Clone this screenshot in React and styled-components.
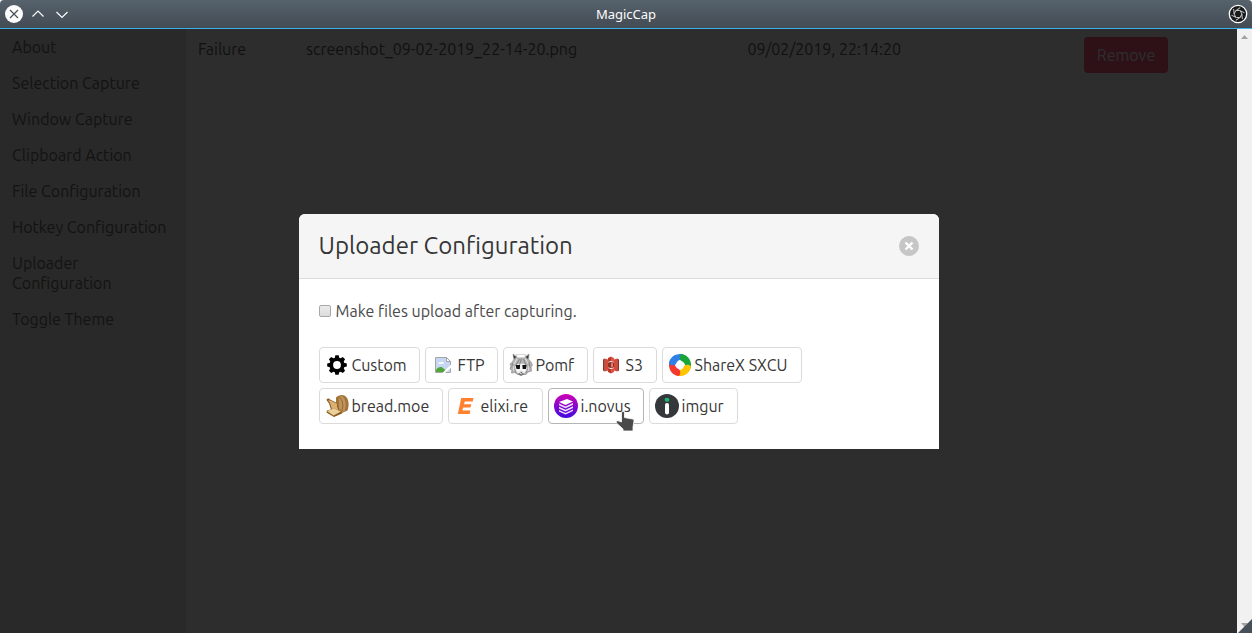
import React, { useState } from 'react';
import styled, { createGlobalStyle, css } from 'styled-components';

const GlobalStyle = createGlobalStyle`
  *, *::before, *::after { box-sizing: border-box; }
  body {
    margin: 0;
    background: #ffffff;
    color: #4a4a4a;
    font: 16px/24px "Ubuntu", "Noto Sans", sans-serif;
  }
  button { font: inherit; }
`;

const Window = styled.div`
  display: flex;
  flex-direction: column;
  height: 100vh;
  overflow: hidden;
`;

const TitleBar = styled.header`
  display: grid;
  grid-template-columns: 1fr auto 1fr;
  align-items: center;
  flex: none;
  height: 29px;
  padding: 0 4px;
  border-bottom: 1px solid #3daee9;
  border-radius: 4px 4px 0 0;
  background: linear-gradient(#56626c, #434b54);
`;

const WindowTitle = styled.h1`
  margin: 0;
  color: #fcfcfc;
  font: 13px/20px "Noto Sans", sans-serif;
`;

const WindowControls = styled.div`
  display: flex;
  gap: 4px;
  justify-content: ${({ $end }) => ($end ? 'flex-end' : 'flex-start')};
`;

const WindowButton = styled.button`
  display: flex;
  width: 20px;
  height: 20px;
  padding: 0;
  border: 0;
  background: none;
`;

const Viewport = styled.div`
  position: relative;
  display: flex;
  flex: 1;
  min-height: 0;
`;

const Page = styled.div`
  position: relative;
  display: flex;
  flex: 1;
  min-width: 0;
`;

const Sidebar = styled.nav`
  flex: none;
  width: 186px;
  background: #dfdfdf;
`;

const MenuList = styled.ul`
  margin: 0;
  padding: 0;
  list-style: none;
`;

const MenuLink = styled.a`
  display: block;
  padding: 8px 12px;
  color: #4a4a4a;
  line-height: 20px;
  text-decoration: none;
`;

const Captures = styled.main`
  flex: 1;
  min-width: 0;
`;

const CaptureTable = styled.table`
  width: 100%;
  border-collapse: collapse;
  table-layout: fixed;
  color: #363636;
`;

const Column = styled.col`
  width: ${({ $width }) => $width};
`;

const Cell = styled.td`
  padding: 8px 12px;
  vertical-align: top;
`;

const RemoveButton = styled.button`
  display: block;
  height: 36px;
  padding: 0 13px;
  border: 0;
  border-radius: 4px;
  background: #ff3860;
  color: #ffffff;
`;

const Overlay = styled.div`
  position: absolute;
  inset: 0;
  display: flex;
  align-items: center;
  justify-content: center;
  background: rgba(10, 10, 10, 0.86);
`;

const ModalCard = styled.section`
  width: 640px;
  max-width: 100%;
  overflow: hidden;
  border-radius: 6px 6px 0 0;
  background: #ffffff;
`;

const ModalHead = styled.header`
  display: flex;
  align-items: center;
  justify-content: space-between;
  padding: 20px;
  border-bottom: 1px solid #dbdbdb;
  background: #f5f5f5;
`;

const ModalTitle = styled.h2`
  margin: 0;
  color: #363636;
  font-size: 24px;
  font-weight: 400;
  line-height: 24px;
`;

const CloseButton = styled.button`
  display: flex;
  width: 20px;
  height: 20px;
  padding: 0;
  border: 0;
  border-radius: 50%;
  background: rgba(10, 10, 10, 0.2);
`;

const ModalBody = styled.div`
  padding: 20px 20px 25px;
`;

const UploadOption = styled.label`
  display: flex;
  align-items: center;
  gap: 5px;
  margin-bottom: 24px;
`;

const Checkbox = styled.input`
  appearance: none;
  width: 12px;
  height: 12px;
  margin: 0;
  border: 1px solid #a8a8a8;
  border-radius: 2px;
  background: linear-gradient(#ebebeb, #dcdcdc);
  &:checked { background: #3273dc; }
`;

const UploaderList = styled.div`
  display: flex;
  flex-wrap: wrap;
  gap: 5px;
`;

const UploaderButton = styled.button`
  display: flex;
  align-items: center;
  gap: 3px;
  width: ${({ $width }) => $width}px;
  height: 36px;
  padding: 0 5px;
  border: 1px solid #dbdbdb;
  border-radius: 4px;
  background: #ffffff;
  color: #363636;
  white-space: nowrap;
  ${({ $hovered }) => $hovered && css`border-color: #b5b5b5;`}
`;

const UploaderIcon = styled.svg`
  flex: none;
  width: 24px;
  height: 24px;
`;

const HoverAnchor = styled.div`
  position: relative;
`;

const Pointer = styled.svg`
  position: absolute;
  top: 22px;
  left: 67px;
  width: 20px;
  height: 22px;
  pointer-events: none;
`;

const ScrollTrack = styled.div`
  display: flex;
  flex: none;
  flex-direction: column;
  justify-content: space-between;
  width: 15px;
  background: #f1f1f1;
`;

const ResizeGrip = styled.svg`
  display: block;
  width: 15px;
  height: 15px;
`;

const GearIcon = () => (
  <UploaderIcon viewBox="0 0 24 24">
    <g fill="#000">
      {[0, 45, 90, 135].map((a) => (
        <path key={a} d="M9.7 5 10.4 2.2h3.2L14.3 5v14l-.7 2.8h-3.2L9.7 19z" transform={`rotate(${a} 12 12)`} />
      ))}
      <circle cx="12" cy="12" r="7.6" />
    </g>
    <circle cx="12" cy="12" r="3.9" fill="#fff" />
  </UploaderIcon>
);

const MissingImageIcon = () => (
  <UploaderIcon viewBox="0 0 24 24">
    <path d="M4.5 4.5h11l4 4v11h-15z" fill="#c5d7f3" stroke="#a5a5a5" />
    <path d="M15.5 4.5v4h4z" fill="#fff" stroke="#a5a5a5" />
    <path d="M7 10.8a1.7 1.7 0 0 1 2.3-1.4 2 2 0 0 1 3.5 1.4z" fill="#fff" />
    <path d="M5 19v-2.2c2.5-3.4 5.5-3.8 8.2-.8L16 19z" fill="#4fa53a" />
    <path d="M20.5 11 11 20.5h2.5l7-6z" fill="#fff" />
  </UploaderIcon>
);

const PomfIcon = () => (
  <UploaderIcon viewBox="0 0 24 24">
    <path d="M5 6 4 1l4 3h8l4-3-.5 5 2.500 3 1.500 3-1.500 2 .5 4-3.500 1-2 2.500H8.500L6 19.500l-3.500.5.5-3-2-1 1-3-1-2 2.500-2z" fill="#b4b4b4" stroke="#8a8a8a" strokeWidth=".7" />
    <path d="M4.300 2 5 6l2.300-2zM19.700 2 19 6l-2.300-2z" fill="#3b3b3b" />
    <path d="M7.500 1.500h9l-.8 3.300H8.300z" fill="#fff" stroke="#bbb" strokeWidth=".6" />
    <path d="M6 12.500q6-4 12 0l-.7 5L14 21.500h-4l-3.300-4z" fill="#f4f4f4" />
    <path d="M6.500 12h4.600l-.3 4H7.500zM13.300 12h4.400l-.8 4h-3.200z" fill="#111" />
    <path d="M10.500 6 7 12M12.500 5.500 10.500 12M14.500 6l2.500 6M3.500 10l-.5 5M20 9l1 6M5.500 16 7 19.500M18.500 16l-1 3.500" stroke="#707070" strokeWidth=".7" fill="none" />
    <path d="m8 6-3 5M16.500 6l2.500 4.500M4 13l1 5M20 13l-1 5" stroke="#e6e6e6" strokeWidth=".9" />
    <path d="M11 18.700h2.500l-1.200 1.500z" fill="#555" />
    <path d="m9 21.500 1-2 2 1.500 2-1.500 1 2-3 1.500z" fill="#777" />
  </UploaderIcon>
);

const BucketIcon = () => (
  <UploaderIcon viewBox="0 0 24 24">
    <path d="m4 6.500 1.800-.9v12.800L4 17.500z" fill="#8c3123" />
    <path d="m5.800 5.600 3.200.9v11l-3.200.9z" fill="#d64a3b" />
    <path d="m18.200 5.600 1.800.9v11l-1.800.9z" fill="#8c3123" />
    <path d="m15 6.500 3.200-.9v12.800l-3.200-.9z" fill="#d64a3b" />
    <path d="M9 5 12 3.600V8L9 9zM9 15l3 1v4.400L9 19z" fill="#b8392c" />
    <path d="m12 3.600 3 1.400v4l-3-1zM15 15l-3 1v4.400l3-1.400z" fill="#e05243" />
    <path d="M9 9.600 12 9l3 .6v4.800l-3 .6-3-.6z" fill="#8c3123" />
    <path d="M12 9.700 14 10.200v3.600l-2 .5z" fill="#e8796c" />
  </UploaderIcon>
);

const shareXBlades = ['#2f80e8', '#18a539', '#ffc400', '#f3392f'];

const ShareXIcon = () => (
  <UploaderIcon viewBox="0 0 24 24">
    {shareXBlades.map((color, i) => (
      <path
        key={color}
        d="M1 10.500A11 11 0 0 1 16.500 2c2.500 1.500 3.200 4.500 2 7C15 5.500 9.500 6 7.800 11 6 12.800 2 12.800 1 10.500z"
        fill={color}
        transform={`rotate(${i * 90} 12 12)`}
      />
    ))}
    <path d="M1 10.500A11 11 0 0 1 7 2.200L9.500 7.500Q8.300 9 7.800 11C6 12.800 2 12.800 1 10.500z" fill="#2f80e8" />
  </UploaderIcon>
);

const BreadIcon = () => (
  <UploaderIcon viewBox="0 0 24 24">
    <path d="M11 3.500C14 0 20 0 22 4c2 3 2 9 .5 12.500L17 19l-6-5z" fill="#a27436" />
    <path d="M14 3c3-2 6-.5 7 2.500 1.500 3 1 7.500 0 10.500L17.500 18 14 14z" fill="#c0935a" />
    <path d="M14.500 3q5 5 2.500 14M18 2q5 5 2.500 14" fill="none" stroke="#8a5f2b" strokeWidth=".8" />
    <path d="M1.500 6C2 4.500 4 4 5 5.500l7 3.500q1.500 1 .8 2.500L14.500 18 6 15.500 4 9.500z" fill="#8d5b20" />
    <path d="m3 6.300 2.500.2 6.500 3.300q.8 1-.2 2l1.700 4.700-6.500-1.500L5 9z" fill="#d9b174" />
    <path d="m1.500 18.500.5-2 7-2 7.500 3 .5 2-8 3.500z" fill="#8a5a20" />
    <path d="m2 17 7-2.500 7 3-7.500 4z" fill="#ecd09a" />
  </UploaderIcon>
);

const ElixireIcon = () => (
  <UploaderIcon viewBox="0 0 24 24">
    <path d="M7.200 4h12.300l-.8 3.500h-8l-.7 2.700h7.300l-.8 3.400H9.200l-.8 3H16.500l-.8 3.400H3.800z" fill="#ff812d" />
  </UploaderIcon>
);

const NovusIcon = () => (
  <UploaderIcon viewBox="0 0 24 24">
    <defs>
      <linearGradient id="novus" x1="0" y1="0" x2="0" y2="1">
        <stop stopColor="#d000b5" />
        <stop offset="1" stopColor="#3f0be0" />
      </linearGradient>
    </defs>
    <circle cx="12" cy="12" r="12" fill="url(#novus)" />
    <path d="m5 8 8-3 6 2.500-7.500 3.500z" fill="#fff" />
    <path d="m5 9.500 6.500 3L19 9v1.700l-7.500 3.500L5 11.200zM5 12.800l6.500 3 7.500-3.500V14l-7.500 3.500-6.500-3zM5 16.100l6.500 3 7.500-3.500v1.300l-7.500 3.500-6.500-3z" fill="#eee4ff" />
  </UploaderIcon>
);

const ImgurIcon = () => (
  <UploaderIcon viewBox="0 0 24 24">
    <circle cx="12" cy="12" r="12" fill="#34373c" />
    <ellipse cx="12" cy="5.700" rx="2.400" ry="2" fill="#1bb76e" />
    <rect x="10" y="9" width="4" height="11.500" rx="2" fill="#fff" />
  </UploaderIcon>
);

const uploaders = [
  { name: 'Custom', width: 101, Icon: GearIcon },
  { name: 'FTP', width: 73, Icon: MissingImageIcon },
  { name: 'Pomf', width: 85, Icon: PomfIcon },
  { name: 'S3', width: 64, Icon: BucketIcon },
  { name: 'ShareX SXCU', width: 140, Icon: ShareXIcon },
  { name: 'bread.moe', width: 124, Icon: BreadIcon },
  { name: 'elixi.re', width: 95, Icon: ElixireIcon },
  { name: 'i.novus', width: 96, Icon: NovusIcon, hovered: true },
  { name: 'imgur', width: 89, Icon: ImgurIcon },
];

const menu = [
  'About',
  'Selection Capture',
  'Window Capture',
  'Clipboard Action',
  'File Configuration',
  'Hotkey Configuration',
  'Uploader Configuration',
  'Toggle Theme',
];

const HandPointer = () => (
  <Pointer viewBox="0 0 20 22">
    <path
      d="M7 1.500c1.200-.7 2.500 0 2.500 1.500v4.500l8 1.500c1 .3 1.500 1 1.500 2l-1 6v4H8v-2L1.500 13c-.7-1.300 0-2.300 1.500-2.300L6.500 12V3z"
      fill="#4a4a4a"
      stroke="#fff"
      strokeWidth=".8"
    />
  </Pointer>
);

export default function App() {
  const [uploadAfter, setUploadAfter] = useState(false);

  return (
    <>
      <GlobalStyle />
      <Window>
        <TitleBar>
          <WindowControls>
            <WindowButton aria-label="Close window">
              <svg width="20" height="20" viewBox="0 0 20 20">
                <circle cx="10" cy="10" r="9" fill="#fcfcfc" />
                <path d="m6 6 8 8m0-8-8 8" stroke="#475059" strokeWidth="1.200" />
              </svg>
            </WindowButton>
            <WindowButton aria-label="Maximize window">
              <svg width="20" height="20" viewBox="0 0 20 20">
                <path d="m4.500 12.500 5.500-5.500 5.500 5.500" fill="none" stroke="#fcfcfc" strokeWidth="1.200" />
              </svg>
            </WindowButton>
            <WindowButton aria-label="Minimize window">
              <svg width="20" height="20" viewBox="0 0 20 20">
                <path d="m4.500 8 5.500 5.500L15.500 8" fill="none" stroke="#fcfcfc" strokeWidth="1.200" />
              </svg>
            </WindowButton>
          </WindowControls>
          <WindowTitle>MagicCap</WindowTitle>
          <WindowControls $end>
            <WindowButton aria-label="Application menu">
              <svg width="20" height="20" viewBox="0 0 20 20">
                <circle cx="10" cy="10" r="8.700" fill="#17191b" stroke="#fff" strokeWidth="1.300" />
                <g stroke="#c4c4c4" strokeWidth="1" fill="none">
                  {[0, 60, 120, 180, 240, 300].map((a) => (
                    <path key={a} d="M8 6.500h3.500l5 2.200" transform={`rotate(${a} 10 10)`} />
                  ))}
                </g>
              </svg>
            </WindowButton>
          </WindowControls>
        </TitleBar>

        <Viewport>
          <Page>
            <Sidebar>
              <MenuList>
                {menu.map((item) => (
                  <li key={item}>
                    <MenuLink href="#">{item}</MenuLink>
                  </li>
                ))}
              </MenuList>
            </Sidebar>
            <Captures>
              <CaptureTable>
                <colgroup>
                  <Column $width="108px" />
                  <Column $width="42%" />
                  <Column $width="32%" />
                  <Column />
                </colgroup>
                <tbody>
                  <tr>
                    <Cell>Failure</Cell>
                    <Cell>screenshot_09-02-2019_22-14-20.png</Cell>
                    <Cell>09/02/2019, 22:14:20</Cell>
                    <Cell>
                      <RemoveButton>Remove</RemoveButton>
                    </Cell>
                  </tr>
                </tbody>
              </CaptureTable>
            </Captures>

            <Overlay>
              <ModalCard role="dialog" aria-labelledby="uploader-title">
                <ModalHead>
                  <ModalTitle id="uploader-title">Uploader Configuration</ModalTitle>
                  <CloseButton aria-label="Close">
                    <svg width="20" height="20" viewBox="0 0 20 20">
                      <path d="m6.500 6.500 7 7m0-7-7 7" stroke="#fff" strokeWidth="2.400" />
                    </svg>
                  </CloseButton>
                </ModalHead>
                <ModalBody>
                  <UploadOption>
                    <Checkbox
                      type="checkbox"
                      checked={uploadAfter}
                      onChange={(e) => setUploadAfter(e.target.checked)}
                    />
                    Make files upload after capturing.
                  </UploadOption>
                  <UploaderList>
                    {uploaders.map(({ name, width, Icon, hovered }) => (
                      <HoverAnchor key={name}>
                        <UploaderButton $width={width} $hovered={hovered}>
                          <Icon />
                          {name}
                        </UploaderButton>
                        {hovered && <HandPointer />}
                      </HoverAnchor>
                    ))}
                  </UploaderList>
                </ModalBody>
              </ModalCard>
            </Overlay>
          </Page>
          <ScrollTrack>
            <ResizeGrip viewBox="0 0 15 15">
              <path d="M4 10 7.500 6 11 10z" fill="#a3a3a3" />
            </ResizeGrip>
            <ResizeGrip viewBox="0 0 15 15">
              <path d="M4 5h7L7.500 9z" fill="#a3a3a3" />
              <path d="M15 1v14H1z" fill="#475059" />
            </ResizeGrip>
          </ScrollTrack>
        </Viewport>
      </Window>
    </>
  );
}
